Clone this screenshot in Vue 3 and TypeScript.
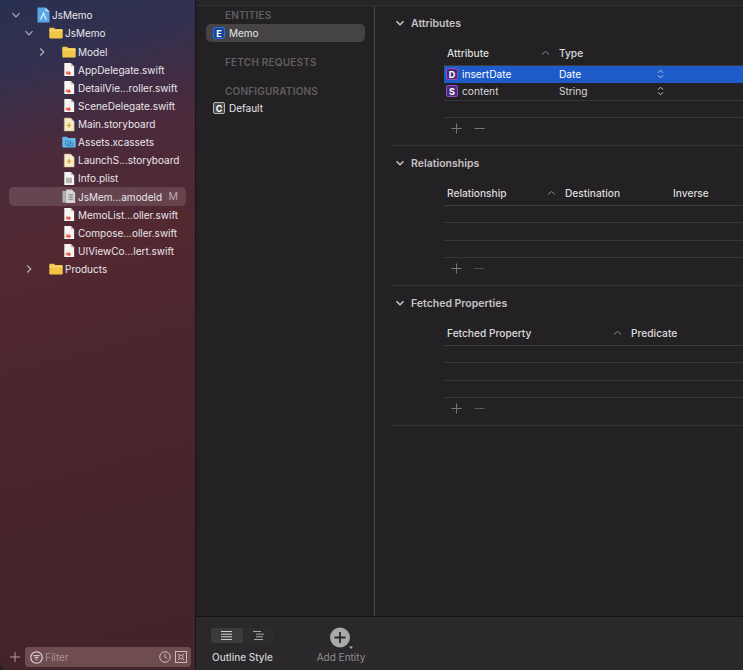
<script setup lang="ts">
interface TreeRow {
  name: string;
  depth: number;
  icon: string;
  arrow?: 'open' | 'closed';
  badge?: string;
  active?: boolean;
}

const tree: TreeRow[] = [
  { name: 'JsMemo', depth: 0, icon: 'project', arrow: 'open' },
  { name: 'JsMemo', depth: 1, icon: 'folder', arrow: 'open' },
  { name: 'Model', depth: 2, icon: 'folder', arrow: 'closed' },
  { name: 'AppDelegate.swift', depth: 2, icon: 'swift' },
  { name: 'DetailVie...roller.swift', depth: 2, icon: 'swift' },
  { name: 'SceneDelegate.swift', depth: 2, icon: 'swift' },
  { name: 'Main.storyboard', depth: 2, icon: 'story' },
  { name: 'Assets.xcassets', depth: 2, icon: 'assets' },
  { name: 'LaunchS...storyboard', depth: 2, icon: 'story' },
  { name: 'Info.plist', depth: 2, icon: 'plist' },
  { name: 'JsMem...amodeld', depth: 2, icon: 'model', badge: 'M', active: true },
  { name: 'MemoList...oller.swift', depth: 2, icon: 'swift' },
  { name: 'Compose...oller.swift', depth: 2, icon: 'swift' },
  { name: 'UIViewCo...lert.swift', depth: 2, icon: 'swift' },
  { name: 'Products', depth: 1, icon: 'folder', arrow: 'closed' },
];

const attributes = [
  { letter: 'D', name: 'insertDate', type: 'Date', selected: true },
  { letter: 'S', name: 'content', type: 'String', selected: false },
];
</script>

<template>
  <div class="window">
    <svg class="defs" width="0" height="0">
      <symbol id="i-page" viewBox="0 0 14 16">
        <path d="M1.500 .5h7.500l4 4v11h-11.500z" fill="#f7f5f3" />
        <path d="M9 .5v4h4z" fill="#cfcac6" />
      </symbol>
      <symbol id="i-folder" viewBox="0 0 14 12">
        <path d="M.3 1.800a1 1 0 0 1 1-1h3.700l1.300 1.300h6.400a1 1 0 0 1 1 1v7.300a1 1 0 0 1-1 1h-11.400a1 1 0 0 1-1-1z" fill="#f2c649" />
        <path d="M.3 3.300h13.400v.8h-13.400z" fill="#fbe48f" />
      </symbol>
    </svg>

    <aside class="sidebar">
      <div class="tree">
        <div
          v-for="(row, i) in tree"
          :key="i"
          class="tree-row"
          :class="{ active: row.active }"
          :style="{ paddingLeft: 1 + row.depth * 13 + 'px' }"
        >
          <span class="arrow">
            <svg v-if="row.arrow" width="10" height="10" viewBox="0 0 10 10">
              <path v-if="row.arrow === 'open'" d="M1.500 3.200l3.500 3.600 3.500-3.600" fill="none" stroke="#aeb0bd" stroke-width="1.200" />
              <path v-else d="M3.200 1.500l3.600 3.500-3.600 3.500" fill="none" stroke="#aeb0bd" stroke-width="1.200" />
            </svg>
          </span>
          <span class="tree-icon">
            <svg v-if="row.icon === 'project'" width="13" height="16" viewBox="0 0 13 16">
              <path d="M.5 .5h8l4 4v11h-12z" fill="#5aa5ea" />
              <path d="M8.500 .5v4h4z" fill="#b7dcfa" />
              <path d="M6.500 4.500l-3.500 8h1.500l2-4.600 2 4.600h1.500z" fill="#d7ecfd" />
            </svg>
            <svg v-else-if="row.icon === 'folder'" width="14" height="12" viewBox="0 0 14 12"><use href="#i-folder" /></svg>
            <svg v-else-if="row.icon === 'assets'" width="14" height="12" viewBox="0 0 14 12">
              <path d="M.3 1.800a1 1 0 0 1 1-1h3.700l1.300 1.300h6.400a1 1 0 0 1 1 1v7.300a1 1 0 0 1-1 1h-11.400a1 1 0 0 1-1-1z" fill="#64b5e8" />
              <path d="M3.500 5h5v4h-5z M6 7h5v3h-5z" fill="none" stroke="#2f7fb8" stroke-width=".8" />
            </svg>
            <svg v-else-if="row.icon === 'swift'" width="12" height="15" viewBox="0 0 14 16">
              <use href="#i-page" />
              <path d="M3.500 10c1.300 1 2.400 1.600 3.300 2-.8-.9-1.600-1.900-2.200-2.700 1.200.9 2.500 1.800 3.500 2.300-.6-.8-1.100-1.500-1.400-2.200 1.500 1.100 2.800 2.500 2.300 4.200-1 .6-3 .9-4.700-.4l-1.600-.4c.4 0 .8-.1 1.100-.3z" fill="#e8533a" />
            </svg>
            <svg v-else-if="row.icon === 'story'" width="12" height="15" viewBox="0 0 14 16">
              <path d="M1.500 .5h7.500l4 4v11h-11.500z" fill="#f5edcf" stroke="#c9b26e" stroke-width=".7" />
              <path d="M7 6v6M4.500 9h5" stroke="#dca72d" stroke-width="1.500" />
            </svg>
            <svg v-else-if="row.icon === 'plist'" width="12" height="15" viewBox="0 0 14 16">
              <use href="#i-page" />
              <rect x="3.500" y="7" width="7" height="6.500" fill="#b4b4b4" />
            </svg>
            <svg v-else width="14" height="15" viewBox="0 0 14 16">
              <rect x="0" y="2" width="9" height="12.500" fill="#aeacac" />
              <path d="M4 .5h6l3.500 3.500v11h-9.500z" fill="#d8d6d5" />
              <path d="M6 6h6M6 8.500h6M6 11h6M9 5v7" stroke="#8d8a8a" stroke-width=".9" />
            </svg>
          </span>
          <span class="tree-name">{{ row.name }}</span>
          <span v-if="row.badge" class="tree-badge">{{ row.badge }}</span>
        </div>
      </div>

      <div class="filter-bar">
        <svg class="add" width="12" height="12" viewBox="0 0 12 12">
          <path d="M6 1v10M1 6h10" stroke="#b59da0" stroke-width="1" />
        </svg>
        <div class="filter">
          <svg width="13" height="13" viewBox="0 0 13 13">
            <circle cx="6.500" cy="6.500" r="5.700" fill="none" stroke="#e8dfe0" stroke-width="1.100" />
            <path d="M3.300 4.700h6.400M4.500 6.700h4M5.700 8.700h1.600" stroke="#e8dfe0" stroke-width="1" />
          </svg>
          <span class="filter-text">Filter</span>
          <svg class="clock" width="12" height="12" viewBox="0 0 12 12">
            <circle cx="6" cy="6" r="5.300" fill="none" stroke="#d3c8c9" stroke-width=".9" />
            <path d="M6 2.800v3.400l2.200 1.200" fill="none" stroke="#d3c8c9" stroke-width=".9" />
          </svg>
          <svg width="12" height="12" viewBox="0 0 12 12">
            <rect x=".5" y=".5" width="11" height="11" fill="none" stroke="#d3c8c9" stroke-width=".9" />
            <path d="M3 3l6 6M9 3l-6 6" stroke="#d3c8c9" stroke-width=".9" />
            <circle cx="6" cy="6" r="2" fill="#6f4c50" stroke="#d3c8c9" stroke-width=".8" />
          </svg>
        </div>
      </div>
    </aside>

    <main class="editor">
      <div class="top-strip"></div>

      <div class="panes">
        <nav class="entities">
          <h6 class="group first">ENTITIES</h6>
          <div class="entity selected">
            <span class="letter blue">E</span>
            <span>Memo</span>
          </div>
          <h6 class="group second">FETCH REQUESTS</h6>
          <h6 class="group third">CONFIGURATIONS</h6>
          <div class="entity">
            <span class="letter grey">C</span>
            <span>Default</span>
          </div>
        </nav>

        <div class="detail">
          <section class="section">
            <header class="section-head">
              <svg width="10" height="10" viewBox="0 0 10 10"><path d="M1.500 3.200l3.500 3.600 3.500-3.600" fill="none" stroke="#d0d0d0" stroke-width="1.300" /></svg>
              <h5>Attributes</h5>
            </header>
            <div class="table">
              <div class="thead cols-attr">
                <span>Attribute</span>
                <svg class="caret" width="9" height="6" viewBox="0 0 9 6"><path d="M1 4.500l3.500-3 3.500 3" fill="none" stroke="#8a888a" /></svg>
                <span>Type</span>
              </div>
              <div
                v-for="attr in attributes"
                :key="attr.name"
                class="trow filled cols-attr"
                :class="{ selected: attr.selected }"
              >
                <span class="attr-name">
                  <span class="letter purple">{{ attr.letter }}</span>
                  {{ attr.name }}
                </span>
                <span></span>
                <span class="attr-type">
                  {{ attr.type }}
                  <svg class="stepper" width="7" height="10" viewBox="0 0 7 10">
                    <path d="M1 3.700l2.500-2.500 2.500 2.500M1 6.300l2.500 2.500 2.500-2.500" fill="none" stroke="#c8c8c8" stroke-width="1" />
                  </svg>
                </span>
              </div>
              <div class="trow"></div>
              <div class="tfoot">
                <svg width="11" height="11" viewBox="0 0 11 11"><path d="M5.500 .5v10M.5 5.500h10" stroke="#777" /></svg>
                <svg width="11" height="11" viewBox="0 0 11 11"><path d="M.5 5.500h10" stroke="#777" /></svg>
              </div>
            </div>
          </section>

          <section class="section">
            <header class="section-head">
              <svg width="10" height="10" viewBox="0 0 10 10"><path d="M1.500 3.200l3.500 3.600 3.500-3.600" fill="none" stroke="#d0d0d0" stroke-width="1.300" /></svg>
              <h5>Relationships</h5>
            </header>
            <div class="table">
              <div class="thead cols-rel">
                <span>Relationship</span>
                <svg class="caret" width="9" height="6" viewBox="0 0 9 6"><path d="M1 4.500l3.500-3 3.500 3" fill="none" stroke="#8a888a" /></svg>
                <span>Destination</span>
                <span>Inverse</span>
              </div>
              <div class="trow"></div>
              <div class="trow"></div>
              <div class="trow"></div>
              <div class="tfoot">
                <svg width="11" height="11" viewBox="0 0 11 11"><path d="M5.500 .5v10M.5 5.500h10" stroke="#777" /></svg>
                <svg width="11" height="11" viewBox="0 0 11 11"><path d="M.5 5.500h10" stroke="#4d4b4d" /></svg>
              </div>
            </div>
          </section>

          <section class="section">
            <header class="section-head">
              <svg width="10" height="10" viewBox="0 0 10 10"><path d="M1.500 3.200l3.500 3.600 3.500-3.600" fill="none" stroke="#d0d0d0" stroke-width="1.300" /></svg>
              <h5>Fetched Properties</h5>
            </header>
            <div class="table">
              <div class="thead cols-fetch">
                <span>Fetched Property</span>
                <svg class="caret" width="9" height="6" viewBox="0 0 9 6"><path d="M1 4.500l3.500-3 3.500 3" fill="none" stroke="#8a888a" /></svg>
                <span>Predicate</span>
              </div>
              <div class="trow"></div>
              <div class="trow"></div>
              <div class="trow"></div>
              <div class="tfoot">
                <svg width="11" height="11" viewBox="0 0 11 11"><path d="M5.500 .5v10M.5 5.500h10" stroke="#777" /></svg>
                <svg width="11" height="11" viewBox="0 0 11 11"><path d="M.5 5.500h10" stroke="#5c5a5c" /></svg>
              </div>
            </div>
          </section>
        </div>
      </div>

      <footer class="bottom-bar">
        <div class="tool outline">
          <div class="segments">
            <span class="segment on">
              <svg width="11" height="9" viewBox="0 0 11 9"><path d="M0 .5h11M0 3.200h11M0 5.800h11M0 8.500h11" stroke="#cfcfcf" /></svg>
            </span>
            <span class="segment">
              <svg width="11" height="9" viewBox="0 0 11 9"><path d="M0 .5h8M3 3.200h8M3 5.800h7M1 8.500h9" stroke="#a9a9a9" /></svg>
            </span>
          </div>
          <span class="tool-label">Outline Style</span>
        </div>
        <div class="tool add-entity">
          <svg width="24" height="23" viewBox="0 0 24 23">
            <circle cx="11" cy="10.500" r="10" fill="#a9a9a9" />
            <path d="M11 5v11M5.500 10.500h11" stroke="#2a282a" stroke-width="1.800" />
            <path d="M20 19.500h4l-2 2.500z" fill="#a9a9a9" />
          </svg>
          <span class="tool-label dim">Add Entity</span>
        </div>
      </footer>
    </main>
  </div>
</template>

<style scoped>
.window {
  display: flex;
  width: 743px;
  height: 670px;
  overflow: hidden;
  background: #242124;
  color: #e6e6e6;
  font-family: Inter, "Liberation Sans", sans-serif;
  font-size: 10px;
}

.defs {
  position: absolute;
}

.sidebar {
  display: flex;
  flex-direction: column;
  flex: none;
  box-sizing: border-box;
  width: 196px;
  border-right: 1px solid #17151a;
  border-bottom-left-radius: 8px;
  background: linear-gradient(165deg, #293050 0%, #33304f 10%, #4a2a3c 22%, #532830 38%, #4a252c 60%, #42242a 100%);
}

.tree {
  padding: 6.200px 9px 0;
}

.tree-row {
  display: flex;
  align-items: center;
  height: 18.14px;
  border-radius: 5px;
  color: #e9e6ea;
}

.tree-row.active {
  background: rgba(255, 255, 255, 0.13);
}

.arrow {
  display: flex;
  flex: none;
  justify-content: center;
  width: 12px;
}

.tree-icon {
  display: flex;
  flex: none;
  justify-content: center;
  width: 14px;
  margin-left: 14px;
  margin-right: 2px;
}

.tree-name {
  white-space: nowrap;
}

.tree-badge {
  margin-left: auto;
  margin-right: 8px;
  color: #bcaab0;
  font-size: 10.5px;
}

.filter-bar {
  display: flex;
  align-items: center;
  margin-top: auto;
  padding: 0 4px 3px 9px;
}

.add {
  flex: none;
  margin-right: 4px;
}

.filter {
  display: flex;
  flex: 1;
  align-items: center;
  height: 20px;
  padding: 0 4px 0 5px;
  border-radius: 3px;
  background: #6f4c50;
}

.filter-text {
  margin-left: 2px;
  color: #a98f92;
}

.clock {
  margin-left: auto;
  margin-right: 4px;
}

.editor {
  display: flex;
  flex: 1;
  flex-direction: column;
  min-width: 0;
}

.top-strip {
  flex: none;
  height: 5px;
  border-bottom: 1px solid #333134;
  background: #272427;
}

.panes {
  display: flex;
  flex: 1;
  min-height: 0;
}

.entities {
  flex: none;
  box-sizing: border-box;
  width: 179px;
  padding: 0 9px 0 10px;
  border-right: 1px solid #4a484a;
}

.group {
  margin: 0;
  padding-left: 19px;
  color: #605e60;
  font-size: 10px;
  font-weight: 600;
  line-height: 12px;
  letter-spacing: 0.2px;
}

.group.first {
  margin-top: 3px;
  margin-bottom: 3px;
}

.group.second {
  margin-top: 14px;
}

.group.third {
  margin-top: 17px;
  margin-bottom: 2px;
}

.entity {
  display: flex;
  align-items: center;
  gap: 4px;
  height: 18px;
  padding-left: 7px;
  border-radius: 5px;
}

.entity.selected {
  background: #454345;
}

.letter {
  display: inline-flex;
  flex: none;
  align-items: center;
  justify-content: center;
  box-sizing: border-box;
  width: 12px;
  height: 12px;
  border-radius: 2px;
  color: #fff;
  font-size: 9px;
  font-weight: 700;
}

.letter.blue {
  border: 1px solid #2a6fe0;
  background: #15459c;
}

.letter.grey {
  border: 1px solid #b8b8b8;
  background: #4a484a;
}

.letter.purple {
  border: 1px solid #8a4fc7;
  background: #4d2a78;
}

.detail {
  flex: 1;
  min-width: 0;
  padding-left: 17px;
}

.section {
  box-sizing: border-box;
  height: 140px;
  border-bottom: 1px solid #353335;
}

.section-head {
  display: flex;
  align-items: center;
  gap: 6px;
  height: 34px;
  margin-left: 3px;
  margin-bottom: 2px;
}

.section-head h5 {
  margin: 0;
  color: #c4c3c4;
  font-size: 10.5px;
  font-weight: 600;
}

.table {
  margin-left: 52px;
  font-size: 10.2px;
}

.thead {
  display: grid;
  align-items: center;
  box-sizing: border-box;
  height: 24px;
  padding-left: 3px;
  padding-bottom: 2px;
  border-bottom: 1px solid #3e3c3e;
  color: #dcdcdc;
  font-weight: 500;
}

.caret {
  justify-self: center;
  margin-right: 8px;
}

.cols-attr {
  grid-template-columns: 92px 20px 1fr;
}

.cols-rel {
  grid-template-columns: 98px 20px 108px 1fr;
}

.cols-fetch {
  grid-template-columns: 164px 20px 1fr;
}

.trow {
  box-sizing: border-box;
  height: 17.3px;
  border-bottom: 1px solid #373537;
}

.trow.filled {
  display: grid;
  align-items: center;
  padding-left: 3px;
  color: #d8d8d8;
}

.trow.selected {
  border-bottom-color: transparent;
  background: #1c5bc8;
  color: #fff;
}

.attr-name {
  display: flex;
  align-items: center;
  gap: 4px;
  margin-left: -1px;
  white-space: nowrap;
}

.attr-type {
  display: flex;
  align-items: center;
}

.stepper {
  position: absolute;
  left: 657px;
}

.tfoot {
  display: flex;
  align-items: center;
  gap: 12px;
  height: 22px;
  padding-left: 7px;
}

.bottom-bar {
  display: flex;
  flex: none;
  box-sizing: border-box;
  height: 54px;
  padding: 11px 0 0 16px;
  border-top: 1px solid #151315;
  background: #2a282a;
}

.tool {
  display: flex;
  flex-direction: column;
  align-items: center;
}

.outline {
  width: 61px;
}

.add-entity {
  width: 60px;
  margin-left: 38px;
  margin-top: -1px;
}

.segments {
  display: flex;
  width: 63px;
  height: 15px;
}

.segment {
  display: flex;
  flex: 1;
  align-items: center;
  justify-content: center;
  background: #2d2b2d;
}

.segment.on {
  border-radius: 3px 0 0 3px;
  background: #3c3a3c;
}

.tool-label {
  margin-top: 8px;
  color: #cfcfcf;
  font-weight: 500;
  white-space: nowrap;
}

.tool-label.dim {
  margin-top: 1px;
  color: #8f8f8f;
  font-weight: 400;
}
</style>

<style>
html,
body {
  margin: 0;
  background: #242124;
}
</style>
